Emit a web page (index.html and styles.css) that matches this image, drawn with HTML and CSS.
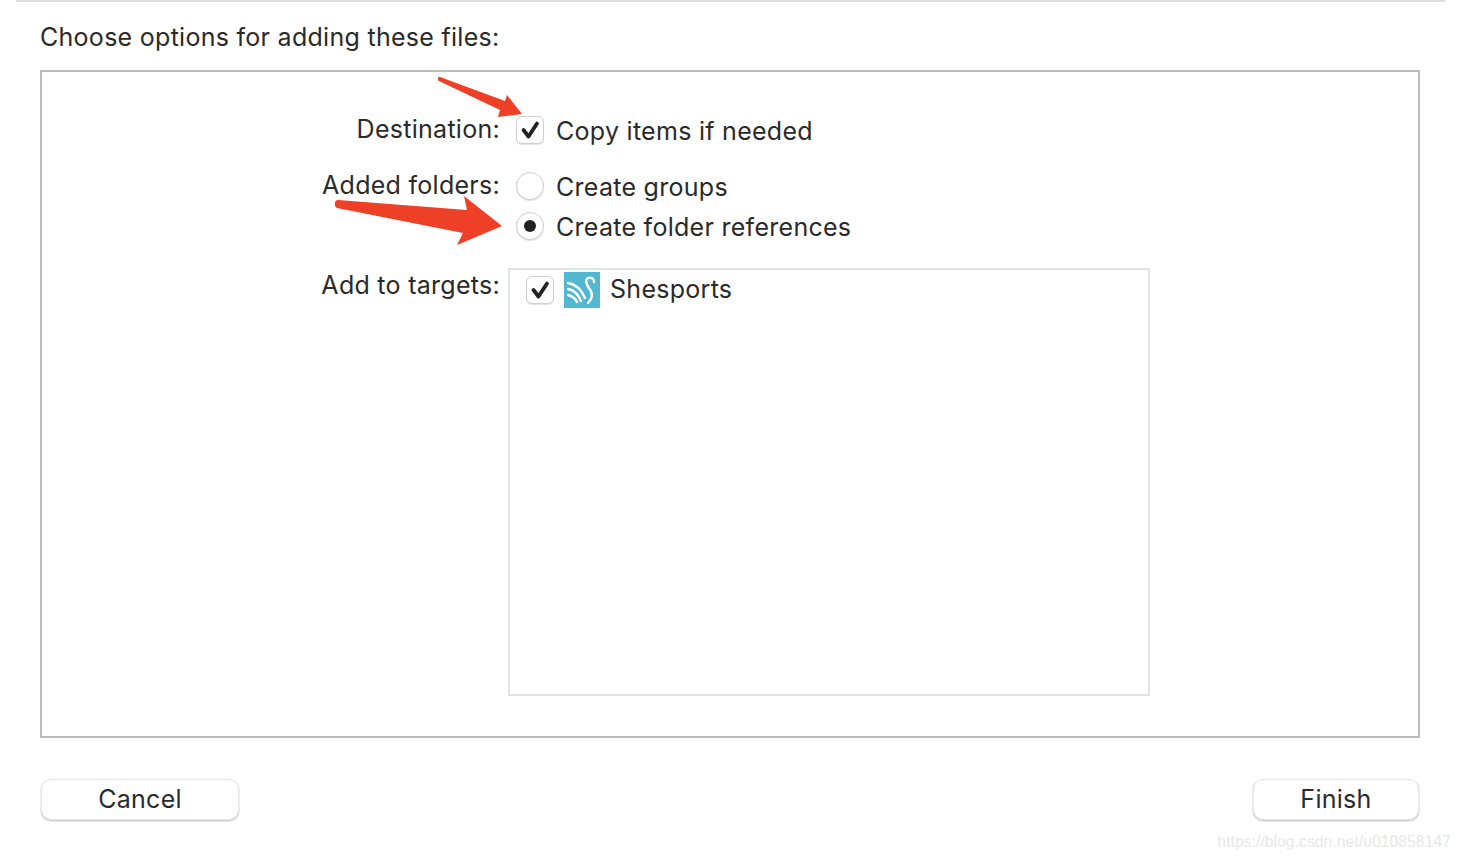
FILE: index.html
```html
<!DOCTYPE html>
<html lang="en">
<head>
<meta charset="utf-8">
<title>Choose options for adding these files</title>
<link rel="stylesheet" href="styles.css">
</head>
<body>
<div class="page">
  <div class="sheet-edge"></div>
  <h1 class="title">Choose options for adding these files:</h1>
  <main class="panel">
    <div class="row row-destination">
      <div class="label">Destination:</div>
      <div class="option">
        <span class="checkbox"><svg viewBox="0 0 28 28" class="tick"><path d="M7.500 14l5 6.500L21 7.500"/></svg></span>
        <span class="option-text">Copy items if needed</span>
      </div>
    </div>
    <div class="row row-folders">
      <div class="label">Added folders:</div>
      <div class="options">
        <div class="option">
          <span class="radio"></span>
          <span class="option-text">Create groups</span>
        </div>
        <div class="option">
          <span class="radio radio-on"></span>
          <span class="option-text">Create folder references</span>
        </div>
      </div>
    </div>
    <div class="row row-targets">
      <div class="label">Add to targets:</div>
      <div class="target-list">
        <div class="target">
          <span class="checkbox"><svg viewBox="0 0 28 28" class="tick"><path d="M7.500 14l5 6.500L21 7.500"/></svg></span>
          <svg class="app-icon" viewBox="0 0 36 36">
            <rect width="36" height="36" fill="#52b8d2"/>
            <g fill="none" stroke="#fff" stroke-width="2.400" stroke-linecap="round">
              <path d="M4 11c7 1 13 6 17 15"/>
              <path d="M4 17c6 1 10 5 13 12"/>
              <path d="M4 23c4 1 7 3 9 7"/>
              <path d="M24 31c5-5 5-10 1-15-3-4-4-8-1-10 2-1 6 0 6 4"/>
            </g>
          </svg>
          <span class="option-text target-name">Shesports</span>
        </div>
      </div>
    </div>
  </main>
  <footer class="footer">
    <button class="btn btn-cancel" type="button">Cancel</button>
    <button class="btn btn-finish" type="button">Finish</button>
  </footer>
  <svg class="arrow arrow-top" viewBox="436 75 88 45"><path d="M440 77 505 101 507 95 522 114 498 117 500 110 439 81C437 80 438 76 440 77Z"/></svg>
  <svg class="arrow arrow-bottom" viewBox="333 194 171 53"><path d="M338 200 467 210 464 196 502 226 457 245 463 233 337 208C334 207 334 200 338 200Z"/></svg>
  <div class="watermark">https://blog.csdn.net/u010858147</div>
</div>
</body>
</html>
```
FILE: styles.css
```css
* { box-sizing: border-box; }
html, body { margin: 0; padding: 0; background: #fff; }
body {
  font-family: Inter, "Liberation Sans", sans-serif;
  color: #2a2a2a;
  letter-spacing: 0.28px;
  overflow: hidden;
}
.page {
  position: relative;
  width: 1460px;
  height: 860px;
  padding-left: 40px;
  padding-right: 40px;
}
.sheet-edge {
  height: 2px;
  margin: 0 -25px 0 -24px;
  background: #dedede;
}
.title {
  margin: 0;
  height: 68px;
  padding-top: 19px;
  font-size: 25px;
  line-height: 32px;
  font-weight: 400;
  white-space: nowrap;
}
.panel {
  height: 668px;
  border: 2px solid #bcbcbc;
  padding-top: 44px;
}
.row { display: flex; }
.label {
  width: 458px;
  flex: none;
  text-align: right;
  font-size: 25px;
  line-height: 32px;
  white-space: nowrap;
}
.row-destination { height: 56px; }
.row-destination .label { margin-top: -3px; }
.row-folders { height: 100px; }
.row-folders .label { margin-top: -3px; }
.row-targets .label { margin-top: -3px; }
.options { display: flex; flex-direction: column; gap: 12px; }
.option {
  display: flex;
  align-items: center;
  height: 28px;
  margin-left: 16px;
  gap: 12px;
}
.option-text {
  font-size: 25px;
  line-height: 32px;
  white-space: nowrap;
  position: relative;
  top: 1px;
}
.checkbox {
  width: 28px;
  height: 28px;
  flex: none;
  border: 1px solid #cfcfcf;
  border-radius: 6px;
  background: #fff;
  box-shadow: 0 1px 1px rgba(0, 0, 0, .12);
  display: block;
  position: relative;
}
.tick {
  position: absolute;
  left: -1px;
  top: -1px;
  width: 28px;
  height: 28px;
}
.tick path { fill: none; stroke: #222; stroke-width: 3.800; stroke-linecap: round; stroke-linejoin: round; }
.radio {
  width: 28px;
  height: 28px;
  flex: none;
  border: 1px solid #d0d0d0;
  border-radius: 50%;
  background: #fff;
  box-shadow: 0 1px 1px rgba(0, 0, 0, .12);
  display: flex;
  align-items: center;
  justify-content: center;
}
.radio-on::after {
  content: "";
  width: 12px;
  height: 12px;
  border-radius: 50%;
  background: #222;
}
.target-list {
  width: 642px;
  height: 428px;
  margin-left: 8px;
  margin-top: -4px;
  border: 2px solid #e2e2e2;
  padding: 2px 0 0 16px;
}
.target { display: flex; align-items: center; height: 36px; }
.target .app-icon { width: 36px; height: 36px; margin-left: 10px; flex: none; }
.target-name { margin-left: 10px; top: -1px; }
.footer {
  display: flex;
  justify-content: space-between;
  margin-top: 41px;
}
.btn {
  height: 41px;
  border: 1px solid #e6e6e6;
  border-radius: 10px;
  background: #fff;
  box-shadow: 0 1px 2px rgba(0, 0, 0, .28);
  font-family: inherit;
  font-size: 25px;
  letter-spacing: 0.28px;
  color: #2a2a2a;
  padding: 0 0 2px;
}
.btn-cancel { width: 198px; margin-left: 1px; }
.btn-finish { width: 166px; margin-right: 1px; }
.arrow { position: absolute; fill: #ee4026; }
.arrow-top { left: 436px; top: 75px; width: 88px; height: 45px; }
.arrow-bottom { left: 333px; top: 194px; width: 171px; height: 53px; }
.watermark {
  position: absolute;
  right: 9px;
  top: 832px;
  font-family: "Liberation Sans", sans-serif;
  font-size: 15.800px;
  letter-spacing: 0;
  line-height: 20px;
  color: #e8e8e8;
  white-space: nowrap;
}
```
